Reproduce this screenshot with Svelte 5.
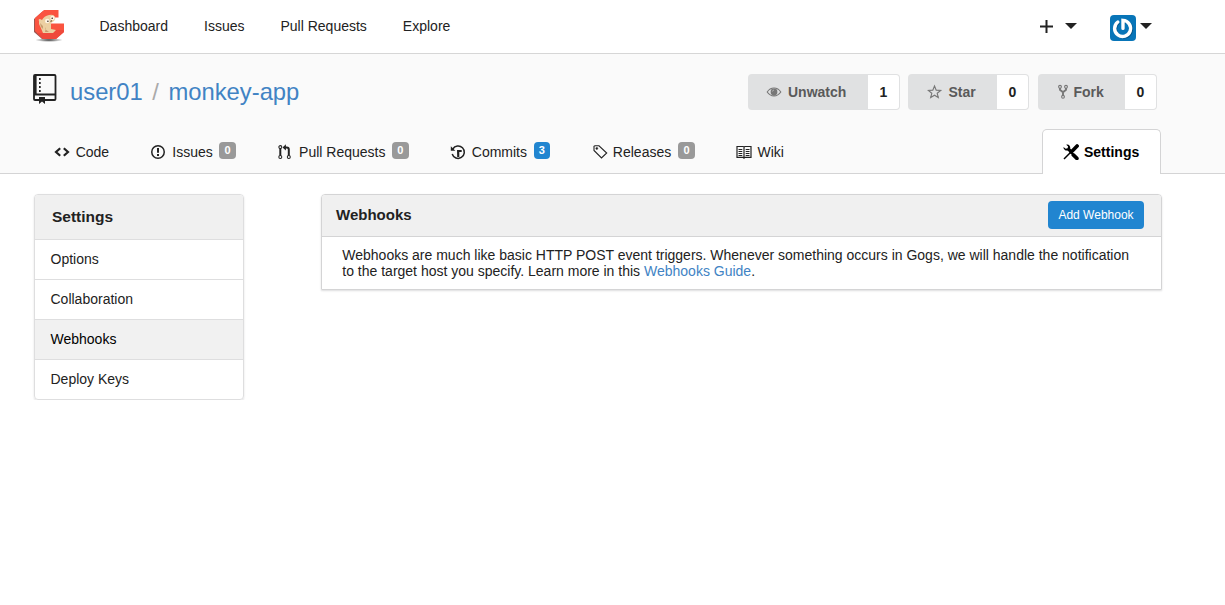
<script>
  const links = ['Dashboard', 'Issues', 'Pull Requests', 'Explore'];
  const actions = [
    { icon: 'eye', label: 'Unwatch', count: 1, cls: 'watching' },
    { icon: 'star', label: 'Star', count: 0, cls: 'starring' },
    { icon: 'fork', label: 'Fork', count: 0, cls: 'forking' }
  ];
  const tabs = [
    { icon: 'code', label: 'Code' },
    { icon: 'issue', label: 'Issues', count: 0 },
    { icon: 'pull', label: 'Pull Requests', count: 0 },
    { icon: 'history', label: 'Commits', count: 3, blue: true },
    { icon: 'tag', label: 'Releases', count: 0 },
    { icon: 'book', label: 'Wiki' }
  ];
  const menu = ['Options', 'Collaboration', 'Webhooks', 'Deploy Keys'];
</script>

{#snippet icon(name)}
  <svg class="icon {name}" width="16" height="16" viewBox="0 0 16 16" fill="none" stroke="currentColor" stroke-width="1">
    {#if name === 'eye'}
      <path d="M1.200 8C3 5.200 5.300 4 8 4s5 1.200 6.800 4c-1.800 2.700-4.100 3.900-6.800 3.900S3 10.700 1.200 8z" stroke-width="1.100" />
      <circle cx="8" cy="8" r="3.400" fill="currentColor" stroke="none" />
      <path d="M6.500 7.400q.1-1 1.200-1.300" stroke="#e0e1e2" stroke-width=".7" />
    {:else if name === 'star'}
      <path d="M7.500 2l1.700 4.100 4.500.3-3.500 2.900 1.100 4.300-3.800-2.400-3.800 2.400 1.100-4.300-3.500-2.900 4.500-.3z" stroke-width="1.150" />
    {:else if name === 'fork'}
      <g stroke-width="1.100"><circle cx="5" cy="2.800" r="1.400" /><circle cx="11" cy="2.800" r="1.400" /><circle cx="8" cy="12.800" r="1.400" /></g>
      <path d="M5 4.100v1.600l3 2.500 3-2.500V4.100M8 8v3.300" stroke-width="1.900" />
    {:else if name === 'code'}
      <path d="M6.200 4.200L2 8l4.200 3.800M9.800 4.200L14 8l-4.200 3.800" stroke-width="2.200" />
    {:else if name === 'issue'}
      <circle cx="8" cy="8" r="6.250" stroke-width="1.500" />
      <path d="M8 4v4.800M8 10v2" stroke-width="2" />
    {:else if name === 'pull'}
      <g stroke-width="1.050"><circle cx="3.300" cy="3.100" r="1.500" /><circle cx="3.300" cy="13" r="1.500" /><circle cx="11.800" cy="13" r="1.500" /></g>
      <path d="M3.300 4.500v7" stroke-width="2" />
      <path d="M7.500 3.500h2.300q2 0 2 2v6" stroke-width="2" />
      <path d="M8.900.3v6.200L5.500 3.400z" fill="currentColor" stroke="none" />
    {:else if name === 'history'}
      <path d="M2.800 5A6.200 6.200 0 1 1 2.200 10" stroke-width="1.500" />
      <path d="M.8 2.300v4.500h4.500z" fill="currentColor" stroke="none" />
      <path d="M7 6h4.700v2H9.300v5H7.200z" fill="currentColor" stroke="none" />
    {:else if name === 'tag'}
      <path d="M2 2.300v4.200l7.500 7.500 5.200-5-7.700-7.200H3z" stroke-width="1.100" />
      <circle cx="4.800" cy="4.400" r="1" fill="currentColor" stroke-width=".5" />
    {:else if name === 'book'}
      <path d="M1 2.500h6.200l.8.700.8-.7H15v10.900H9l-1 .8-1-.8H1zM8 3v11" stroke-width="1.200" />
      <path d="M2.500 5.500h3.800M2.500 7.500h3.800M2.500 9.500h3.800M2.500 11.500h3.800M9.700 5.500h3.800M9.700 7.500h3.800M9.700 9.500h3.800M9.700 11.500h3.800" stroke-width="1" />
    {:else if name === 'tools'}
      <path d="M1 15L8.200 7.800" stroke-width="1.500" />
      <path d="M8.300 8l5.800-6" stroke-width="3.600" stroke-linecap="round" />
      <path d="M5 5.500l9 9" stroke-width="1.800" />
      <path d="M10.300 10.900l3.600 3.500" stroke-width="3.600" stroke-linecap="round" />
      <path d="M3.300.7C5.800.1 7.700 2.100 7.200 4.500l1.400 1.500-2 2-1.500-1.500C2.500 7.100.2 5.200.5 2.900l2.200 1.900 1.900-.5.500-1.800z" fill="currentColor" stroke="none" />
    {/if}
  </svg>
{/snippet}

<nav>
  <svg class="logo" width="32" height="34" viewBox="0 0 32 34">
    <defs><radialGradient id="shade"><stop offset="0" stop-color="#333" /><stop offset="1" stop-color="#555" stop-opacity="0" /></radialGradient></defs>
    <ellipse cx="16" cy="31" rx="14" ry="2" fill="url(#shade)" />
    <path d="M10 2L1 10v13l8 7h3L4 20z" fill="#9c5650" />
    <path d="M11 1h14.500v7.500H16l-4 5 6 1h13V23l-8 7H10l-8-8V9z" fill="#fa5440" />
    <path d="M18 21h13v2l-8 7H10l-6-6h14z" fill="#ef493b" />
    <path d="M6 12q-1-2 1-2l2 1q2-4 7-5 5-1 6 2 1 2-1 4l-3 2v6l5 1-3 3h-10q-2-5-4-9z" fill="#ecd0a2" />
    <path d="M7 14l3 3v3l-2-2zM13 18l-1 2 4 3h-4z" fill="#c79d6e" />
    <circle cx="14.300" cy="12" r="2.300" fill="#fff6e5" /><circle cx="19.500" cy="8.900" r="2.200" fill="#fff6e5" />
    <circle cx="14.900" cy="12.300" r=".8" fill="#352a24" /><circle cx="19.200" cy="9.300" r=".8" fill="#352a24" />
    <path d="M17 12.500l1.500-1.500.5 1.500z" fill="#51392c" />
  </svg>
  {#each links as link}<a class="link" href="#top">{link}</a>{/each}
  <div class="account">
    <svg class="plus" width="13" height="13" viewBox="0 0 13 13"><path d="M6.500 0v13M0 6.500h13" stroke="#222" stroke-width="2" /></svg>
    <svg class="caret" width="12" height="6" viewBox="0 0 12 6"><path d="M0 0h12L6 6z" fill="#222" /></svg>
    <svg class="avatar" width="26" height="26" viewBox="0 0 26 26">
      <rect width="26" height="26" rx="4" fill="#0875b8" />
      <path d="M8.600 6.800A8 8 0 1 0 13 5.400v8.200" transform="translate(.5 .8)" fill="none" stroke="#05558a" stroke-width="3" />
      <path d="M7.800 7A8 8 0 1 0 13 5.400v8" fill="none" stroke="#fff" stroke-width="3.400" stroke-linecap="round" />
    </svg>
    <svg class="caret last" width="12" height="6" viewBox="0 0 12 6"><path d="M0 0h12L6 6z" fill="#222" /></svg>
  </div>
</nav>

<header>
  <div class="repo">
    <svg class="repo-icon" width="24" height="31" viewBox="0 0 24 31">
      <path d="M2 1h19.500q1 0 1 1v23q0 1-1 1H2q-1 0-1-1V2q0-1 1-1zM1 20.500h21.500" fill="none" stroke="#222" stroke-width="1.800" />
      <path d="M2.300 1v19" stroke="#222" stroke-width="2.600" />
      <path d="M6 4h1.700v2H6zm0 4h1.700v2H6zm0 4h1.700v2H6zm0 4h1.700v2H6zM6 23h6v7l-3-2.500L6 30z" fill="#222" />
    </svg>
    <h1><a href="#user">user01</a><span>/</span><a href="#repo">monkey-app</a></h1>
    <div class="actions">
      {#each actions as a}
        <div class="action {a.cls}">
          <button>{@render icon(a.icon)}<b>{a.label}</b></button><strong>{a.count}</strong>
        </div>
      {/each}
    </div>
  </div>
  <div class="tabs">
    {#each tabs as t}
      <a class="tab" href="#tab">{@render icon(t.icon)}<span>{t.label}</span>{#if t.count !== undefined}<i class:blue={t.blue}>{t.count}</i>{/if}</a>
    {/each}
    <a class="active" href="#settings">{@render icon('tools')}<span>Settings</span></a>
  </div>
</header>

<main>
  <aside>
    <h2>Settings</h2>
    {#each menu as m}<a href="#menu" class:current={m === 'Webhooks'}>{m}</a>{/each}
  </aside>
  <section>
    <div class="head"><h3>Webhooks</h3><button>Add Webhook</button></div>
    <p>Webhooks are much like basic HTTP POST event triggers. Whenever something occurs in Gogs, we will handle the notification to the target host you specify. Learn more in this <a href="#guide">Webhooks Guide</a>.</p>
  </section>
</main>

<style>
  :global(body) { background: #fff; color: #222; font: 14px/16px "Liberation Sans", Arial, sans-serif; }
  * { box-sizing: border-box; }
  a { color: inherit; text-decoration: none; }
  svg { display: block; flex: none; }
  button { font: inherit; border: 0; }
  nav { height: 54px; border-bottom: 1px solid #d6d6d6; display: flex; align-items: center; padding: 0 73.500px 1px 33px; }
  .logo { margin-right: 34.500px; }
  .link { margin-right: 36px; }
  .account { margin-left: auto; display: flex; align-items: center; }
  .plus { margin: 0 12px 0 0; }
  .caret { margin-bottom: 1px; }
  .avatar { margin: 3px 4px 0 32.500px; }
  header { height: 120px; background: #fafafa; border-bottom: 1px solid #d4d4d5; }
  .repo { height: 75px; display: flex; padding: 20px 68px 0 33px; }
  h1 { margin: 3px 0 0 13px; font-size: 23.800px; line-height: 30px; font-weight: 400; color: #4183c4; }
  h1 span { color: #aaa; margin: 0 9.500px; }
  .actions { margin-left: auto; display: flex; }
  .action { display: flex; height: 36px; }
  .watching { width: 152px; margin-right: 8px; }
  .starring { width: 121px; margin-right: 9px; }
  .forking { width: 119px; }
  .action button { flex: 1; display: flex; align-items: center; padding: 0 0 0 18px; background: #e0e1e2; color: #5a5a5a; border-radius: 4px 0 0 4px; }
  .action b { margin-left: 6px; }
  .action .icon { color: #777; }
  .starring button { padding-left: 19px; }
  .starring b { margin-left: 5.500px; }
  .forking button { padding-left: 17px; }
  .forking b { margin-left: 2.500px; }
  .action strong { width: 32px; border: 1px solid #e0e1e2; border-left: 0; border-radius: 0 4px 4px 0; background: #fff; text-align: center; line-height: 34px; }
  .tabs { height: 45px; display: flex; padding: 0 64px 0 53.700px; }
  .tab { height: 45px; display: flex; align-items: center; margin-right: 41.200px; padding-top: 1px; }
  .tab span { margin-left: 6px; }
  .tab .tag { margin-left: .4px; }
  .tab .tag + span { margin-left: 5.200px; }
  .tab .book { margin-left: .5px; }
  .tab .book + span { margin-left: 5px; }
  .tab i { font: bold 11px/17px "Liberation Sans", Arial, sans-serif; width: 16.500px; height: 17px; background: #999; color: #fff; border-radius: 4px; text-align: center; margin: -4px 0 0 6.600px; }
  .tab .tag ~ i { margin-left: 7px; }
  .tab i.blue { background: #2185d0; }
  .active { height: 45px; width: 119px; margin-left: auto; display: flex; align-items: center; background: #fff; border: 1px solid #d4d4d5; border-bottom: 0; border-radius: 5px 5px 0 0; padding-left: 20px; color: #000; font-weight: 700; }
  .active span { margin-left: 5px; }
  main { display: flex; align-items: flex-start; padding: 20px 63px 0 34px; }
  aside { width: 210px; border: 1px solid #dededf; border-radius: 4px; box-shadow: 0 1px 2px rgba(34,36,38,.15); overflow: hidden; }
  h2 { margin: 0; height: 44px; padding-left: 17px; background: #f0f0f0; font-size: 15.500px; line-height: 44px; }
  aside a { display: block; height: 40px; line-height: 38px; padding-left: 15.500px; border-top: 1px solid #dededf; }
  aside .current { background: #f1f1f1; color: #000; }
  section { width: 841px; margin-left: 77px; border: 1px solid #d4d4d5; border-radius: 4px 4px 0 0; box-shadow: 0 1px 2px rgba(34,36,38,.15); }
  .head { height: 42px; display: flex; align-items: center; justify-content: space-between; background: #f0f0f0; border-bottom: 1px solid #d4d4d5; border-radius: 3px 3px 0 0; padding: 0 17px 2px 14px; }
  h3 { margin: 0; font-size: 15px; }
  .head button { width: 96px; height: 28px; padding: 0; border-radius: 4px; background: #2185d0; color: #fff; font-size: 12px; }
  p { margin: 0; height: 52px; padding: 10px 20px; padding-left: 20.300px; }
  p a { color: #4183c4; }
</style>
